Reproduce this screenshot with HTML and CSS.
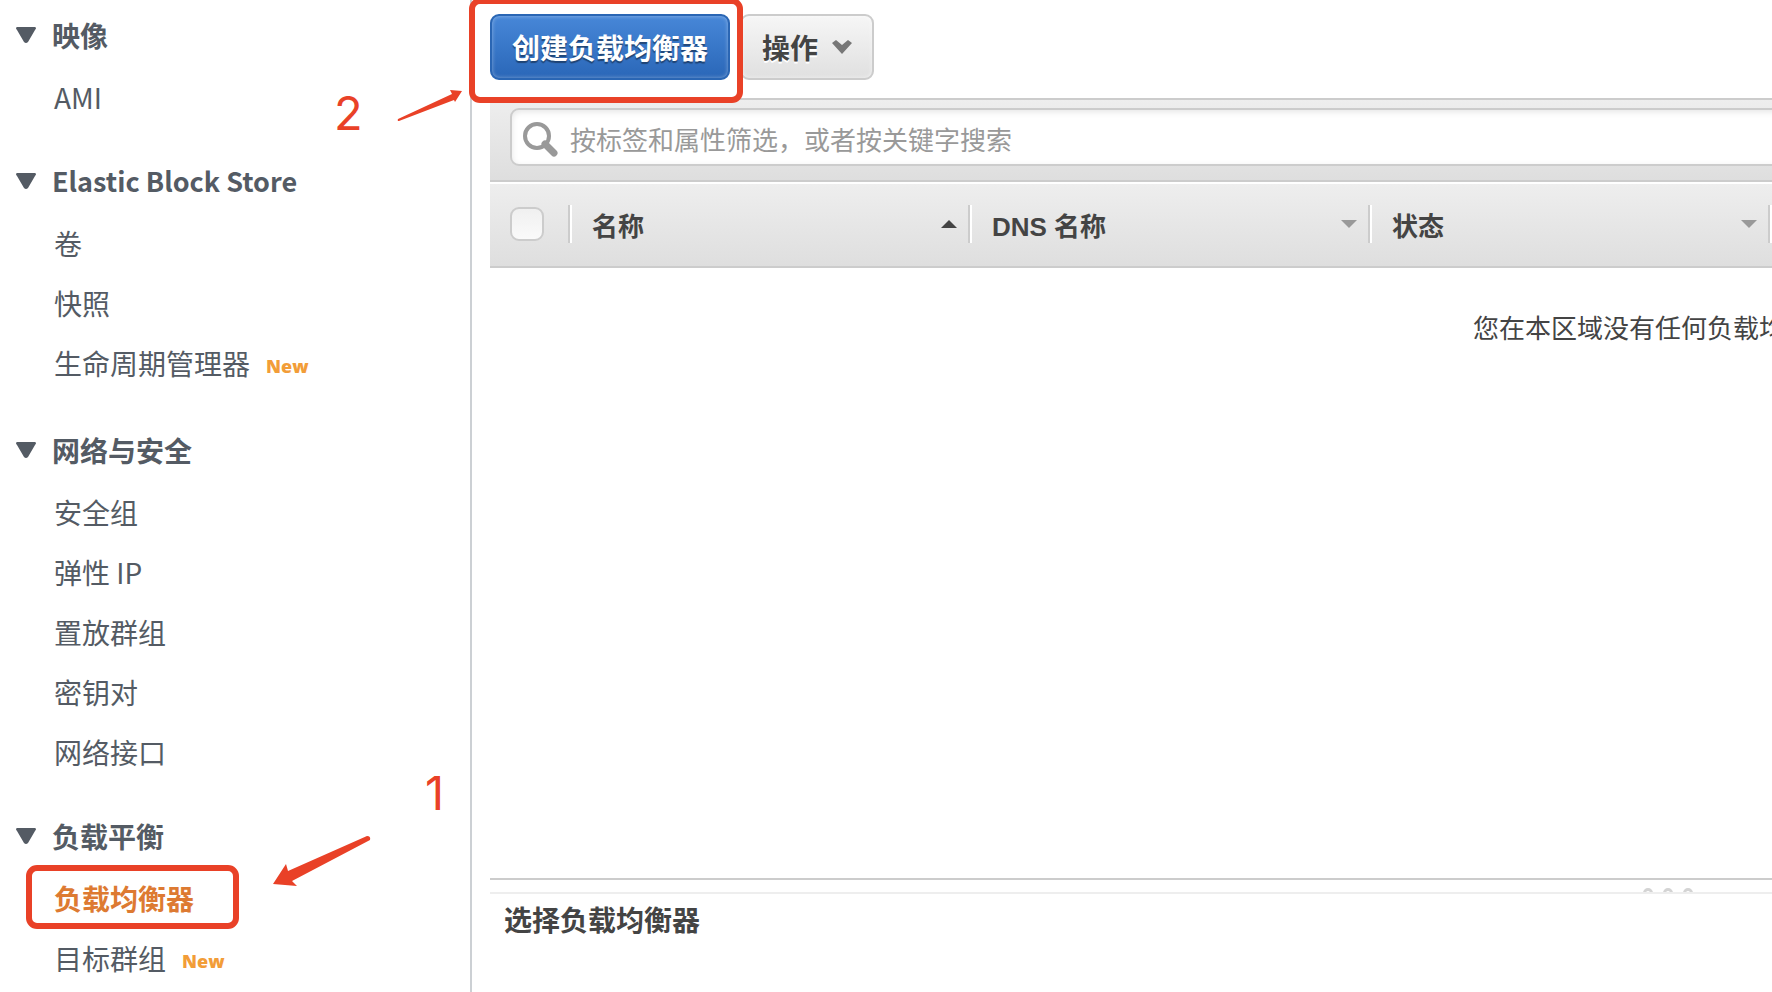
FILE: index.html
```html
<!DOCTYPE html>
<html lang="zh-CN">
<head>
    <meta charset="UTF-8">
    <meta name="viewport" content="width=device-width, initial-scale=1.0">
    <title>负载均衡器</title>
    <link rel="stylesheet" href="styles.css">
</head>
<body>
    <nav class="sidebar">
        <section class="nav-group">
            <h2><svg class="toggle" viewBox="0 0 20 16"><path d="M1 0h18q2 1 0 3L12 15q-2 2-4 0L1 3q-2-2 0-3z"/></svg>映像</h2>
            <ul>
                <li><a href="#">AMI</a></li>
            </ul>
        </section>
        <section class="nav-group">
            <h2 class="latin"><svg class="toggle" viewBox="0 0 20 16"><path d="M1 0h18q2 1 0 3L12 15q-2 2-4 0L1 3q-2-2 0-3z"/></svg>Elastic Block Store</h2>
            <ul>
                <li><a href="#">卷</a></li>
                <li><a href="#">快照</a></li>
                <li><a href="#">生命周期管理器</a><span class="badge">New</span></li>
            </ul>
        </section>
        <section class="nav-group">
            <h2><svg class="toggle" viewBox="0 0 20 16"><path d="M1 0h18q2 1 0 3L12 15q-2 2-4 0L1 3q-2-2 0-3z"/></svg>网络与安全</h2>
            <ul>
                <li><a href="#">安全组</a></li>
                <li><a href="#">弹性 IP</a></li>
                <li><a href="#">置放群组</a></li>
                <li><a href="#">密钥对</a></li>
                <li><a href="#">网络接口</a></li>
            </ul>
        </section>
        <section class="nav-group">
            <h2><svg class="toggle" viewBox="0 0 20 16"><path d="M1 0h18q2 1 0 3L12 15q-2 2-4 0L1 3q-2-2 0-3z"/></svg>负载平衡</h2>
            <ul>
                <li class="active"><a href="#">负载均衡器</a></li>
                <li><a href="#">目标群组</a><span class="badge">New</span></li>
            </ul>
        </section>

        <!-- step markers -->
        <span class="step step-one">1</span>
        <svg class="arrow arrow-one" viewBox="0 0 98 52"><path d="M0 48L13 28L15 35L94 0Q98 0 97 4L19 45L24 50Z"/></svg>
        <span class="step step-two">2</span>
        <svg class="arrow arrow-two" viewBox="0 0 66 32"><path d="M65 1L53 0L55 4L1 29Q0 31 2 31L57 10L58 12Z"/></svg>
    </nav>

    <main class="content">
        <div class="toolbar">
            <div class="highlight">
                <button class="btn btn-primary">创建负载均衡器</button>
            </div>
            <button class="btn">操作
                <svg class="chevron" viewBox="0 0 20 14"><path d="M0 3L4 0L10 5L16 0L20 3L10 14Z"/></svg>
            </button>
        </div>

        <div class="filter-bar">
            <label class="search">
                <svg class="search-icon" viewBox="0 0 36 36"><circle cx="15" cy="15" r="12"/><path d="M23 23L32 32"/></svg>
                <input type="text" aria-label="筛选" placeholder="按标签和属性筛选，或者按关键字搜索">
            </label>
        </div>

        <div class="grid">
            <table>
                <thead>
                    <tr>
                        <th class="check"><input type="checkbox" aria-label="全选"></th>
                        <th class="col"><div>名称<svg class="sort sorted" viewBox="0 0 16 8"><path d="M0 8L8 0L16 8Z"/></svg></div></th>
                        <th class="col"><div>DNS 名称<svg class="sort" viewBox="0 0 16 8"><path d="M0 0L8 8L16 0Z"/></svg></div></th>
                        <th class="col"><div>状态<svg class="sort" viewBox="0 0 16 8"><path d="M0 0L8 8L16 0Z"/></svg></div></th>
                        <th><div></div></th>
                    </tr>
                </thead>
                <tbody>
                    <tr>
                        <td colspan="5">您在本区域没有任何负载均衡器。</td>
                    </tr>
                </tbody>
            </table>
        </div>

        <section class="details">
            <div class="splitter"><i></i><i></i><i></i></div>
            <h3>选择负载均衡器</h3>
        </section>
    </main>
</body>
</html>
```

FILE: styles.css
```css
*, *::after {
    box-sizing: border-box;
}
body {
    display: flex;
    height: 100vh;
    margin: 0;
    overflow: hidden;
    background: white;
    color: #444;
    font-family: "Liberation Sans", "Noto Sans CJK SC", sans-serif;
    font-size: 26px;
}

/* Sidebar */
.sidebar {
    position: relative;
    flex: none;
    width: 472px;
    padding-top: 3px;
    border-right: 2px solid #ccd0d4;
    color: #545b64;
    font-family: "Noto Sans CJK SC", sans-serif;
    font-size: 28px;
}
.nav-group {
    margin-bottom: 22px;
}
.nav-group h2 {
    display: flex;
    align-items: center;
    gap: 16px;
    margin: 0;
    padding-left: 16px;
    font-size: 28px;
    line-height: 64px;
}
.nav-group .latin {
    font-size: 27px;
}
.toggle {
    width: 20px;
    height: 16px;
    fill: #545b64;
}
.nav-group ul {
    margin: 0;
    padding: 0;
    list-style: none;
}
.nav-group li {
    position: relative;
    display: flex;
    padding-left: 54px;
    line-height: 60px;
}
.nav-group a {
    color: inherit;
    text-decoration: none;
}
.nav-group .active {
    color: #dd7a32;
    font-weight: bold;
}
.active::after,
.highlight::after {
    content: "";
    position: absolute;
    border: 6px solid #e94127;
    border-radius: 11px;
    pointer-events: none;
}
.active::after {
    left: 26px;
    top: -3px;
    width: 213px;
    height: 64px;
}
.badge {
    margin-left: 16px;
    padding-top: 3px;
    color: #f29d38;
    font-family: "Open Sans", sans-serif;
    font-size: 18px;
    font-weight: 800;
}

/* Step markers */
.step {
    position: absolute;
    color: #e94127;
    font-family: Inter, sans-serif;
    font-size: 47px;
    line-height: 48px;
}
.step-one {
    left: 425px;
    top: 769px;
}
.step-two {
    left: 334px;
    top: 89px;
}
.arrow {
    position: absolute;
    fill: #e94127;
}
.arrow-one {
    left: 273px;
    top: 836px;
    width: 98px;
    height: 52px;
}
.arrow-two {
    left: 397px;
    top: 90px;
    width: 66px;
    height: 32px;
}

/* Content is laid out wider than the window and runs off to the right */
.content {
    display: flex;
    flex: none;
    flex-direction: column;
    width: 2356px;
    margin-left: 18px;
}
.toolbar {
    display: flex;
    gap: 10px;
    padding: 14px 0 18px;
}
.highlight {
    position: relative;
    z-index: 1;
}
.highlight::after {
    left: -21px;
    right: -13px;
    top: -16px;
    bottom: -23px;
}
.btn {
    display: flex;
    align-items: center;
    gap: 14px;
    height: 66px;
    padding: 0 20px;
    border: 2px solid #ccc;
    border-radius: 9px;
    background: linear-gradient(#f6f6f6, #e0e0e0);
    box-shadow: inset 0 0 4px rgba(255,255,255,0.6);
    color: #444;
    font-family: inherit;
    font-size: 28px;
    font-weight: bold;
    text-shadow: 0 2px 0 white;
}
.btn-primary {
    border-color: #2a66b4;
    background: linear-gradient(#4787d8, #2a67b8);
    box-shadow: inset 0 0 4px rgba(255,255,255,0.4);
    color: white;
    text-shadow: 0 2px 1px rgba(0,0,0,0.4);
}
.chevron {
    width: 20px;
    height: 14px;
    fill: #777;
}
.filter-bar {
    padding: 8px 0 14px 20px;
    border-top: 2px solid #ccc;
    border-bottom: 2px solid #ccc;
    background: linear-gradient(#eee, #dedede);
}
.search {
    display: flex;
    align-items: center;
    gap: 12px;
    height: 58px;
    padding: 4px 0 0 10px;
    border: 2px solid #ccc;
    border-radius: 9px 0 0 9px;
    background: white;
    box-shadow: inset 0 2px 6px rgba(0,0,0,0.1);
}
.search-icon {
    width: 36px;
    height: 36px;
    fill: none;
    stroke: #999;
    stroke-width: 4;
}
.search-icon path {
    stroke-width: 7;
    stroke-linecap: round;
}
.search input {
    flex: 1;
    padding: 4px 0 0;
    border: none;
    outline: none;
    background: none;
    font-family: inherit;
    font-size: 26px;
}
.search input::placeholder {
    color: #999;
}

/* Table */
.grid {
    flex: 1;
    margin-top: 2px;
}
table {
    width: 100%;
    border-collapse: collapse;
    table-layout: fixed;
}
thead tr {
    height: 84px;
    background: linear-gradient(#eee, #dedede);
    box-shadow: inset 0 -2px 0 #ccc;
}
th {
    padding: 0 0 4px;
    text-align: left;
}
th div {
    display: flex;
    align-items: center;
    justify-content: space-between;
    height: 38px;
    padding: 0 11px 0 22px;
    border-left: 2px solid #ccc;
    box-shadow: inset 2px 0 0 white;
}
.check {
    width: 78px;
    padding-left: 20px;
}
.check input {
    display: block;
    width: 34px;
    height: 34px;
    margin: 0;
    appearance: none;
    border: 2px solid #ccc;
    border-radius: 9px;
    background: linear-gradient(#f0f0f0, #fafafa);
}
.col {
    width: 400px;
}
.sort {
    width: 16px;
    height: 8px;
    fill: #999;
}
.sorted {
    fill: #444;
}
td {
    padding: 41px 0;
    line-height: 40px;
    text-align: center;
}

/* Details pane */
.details {
    height: 114px;
    border-top: 2px solid #ccc;
}
.splitter {
    display: flex;
    justify-content: center;
    gap: 10px;
    height: 14px;
    padding-top: 8px;
    overflow: hidden;
    border-bottom: 2px solid #eee;
}
.splitter i {
    width: 10px;
    height: 10px;
    border: 3px solid #d4d4d4;
    border-radius: 50%;
}
.details h3 {
    margin: 0;
    padding: 8px 14px;
    font-size: 28px;
    line-height: 40px;
}
```
